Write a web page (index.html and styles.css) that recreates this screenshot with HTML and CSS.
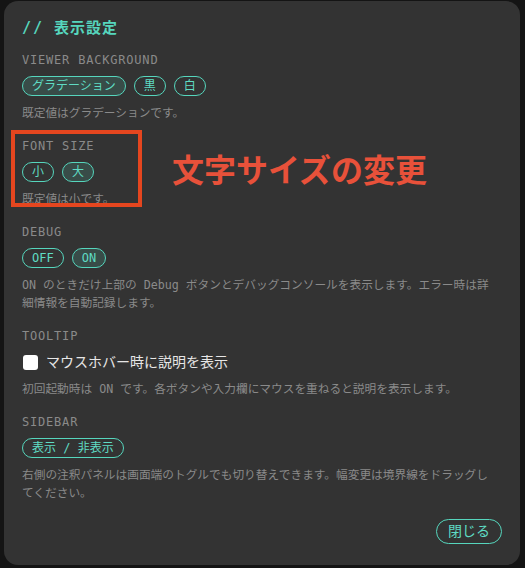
FILE: index.html
```html
<!DOCTYPE html>
<html lang="ja">

<head>
    <meta charset="UTF-8">
    <meta name="viewport" content="width=device-width, initial-scale=1.0">
    <title>表示設定</title>
    <link rel="stylesheet" href="styles.css">
</head>

<body>
    <div class="panel">
        <h1 class="title"><span class="slash">//</span> 表示設定</h1>

        <div class="group">
            <div class="label">VIEWER BACKGROUND</div>
            <div class="pills">
                <button class="pill on">グラデーション</button>
                <button class="pill">黒</button>
                <button class="pill">白</button>
            </div>
            <p class="note">既定値はグラデーションです。</p>
        </div>

        <div class="group">
            <div class="label">FONT SIZE</div>
            <div class="pills">
                <button class="pill">小</button>
                <button class="pill on">大</button>
            </div>
            <p class="note">既定値は小です。</p>
        </div>

        <div class="group">
            <div class="label">DEBUG</div>
            <div class="pills">
                <button class="pill">OFF</button>
                <button class="pill on">ON</button>
            </div>
            <p class="note">ON のときだけ上部の Debug ボタンとデバッグコンソールを表示します。エラー時は詳細情報を自動記録します。</p>
        </div>

        <div class="group">
            <div class="label">TOOLTIP</div>
            <label class="check">
                <input type="checkbox">
                <span>マウスホバー時に説明を表示</span>
            </label>
            <p class="note">初回起動時は ON です。各ボタンや入力欄にマウスを重ねると説明を表示します。</p>
        </div>

        <div class="group">
            <div class="label">SIDEBAR</div>
            <div class="pills">
                <button class="pill">表示 / 非表示</button>
            </div>
            <p class="note">右側の注釈パネルは画面端のトグルでも切り替えできます。幅変更は境界線をドラッグしてください。</p>
        </div>

        <div class="footer">
            <button class="close">閉じる</button>
        </div>

        <!-- annotation overlay -->
        <div class="mark"></div>
        <div class="mark-text">文字サイズの変更</div>
    </div>
</body>

</html>
```

FILE: styles.css
```css
body {
    margin: 0;
    padding: 1px 5px 3px 4px;
    background-color: #141414;
    font-family: "DejaVu Sans Mono", "Noto Sans CJK JP", monospace;
    color: #8a8a8a;
}

.panel {
    position: relative;
    background-color: #333333;
    border-radius: 14px;
    padding: 17px 18px 21px 18px;
}

.title {
    margin: 0 0 14px;
    font-size: 15px;
    line-height: 20px;
    font-weight: bold;
    color: #56d6bd;
    letter-spacing: 1px;
}

.slash {
    letter-spacing: 2px;
}

.group + .group {
    margin-top: 16px;
}

.label {
    font-size: 12px;
    line-height: 16px;
    letter-spacing: 0.8px;
    color: #8a8a8a;
    margin-bottom: 8px;
}

.pills {
    display: flex;
    gap: 8px;
}

.pill {
    font-family: inherit;
    font-size: 12px;
    line-height: 16px;
    padding: 1px 9px;
    border: 1px solid #56d6bd;
    border-radius: 999px;
    background: transparent;
    color: #5fdcc4;
    cursor: pointer;
}

.pill.on {
    background-color: rgba(86, 214, 189, 0.16);
}

.note {
    margin: 8px 10px 0 0;
    font-size: 11.7px;
    line-height: 18px;
    color: #8a8a8a;
}

.check {
    display: flex;
    align-items: center;
    gap: 8px;
    height: 20px;
    font-size: 14px;
    line-height: 20px;
    color: #e6e6e6;
}

.check input {
    appearance: none;
    margin: 0 0 0 1px;
    width: 15px;
    height: 15px;
    border-radius: 3px;
    background-color: #ffffff;
}

.footer {
    display: flex;
    justify-content: flex-end;
    margin-top: 17px;
}

.close {
    font-family: inherit;
    font-size: 14px;
    line-height: 19px;
    padding: 2px 11px;
    border: 1px solid #56d6bd;
    border-radius: 999px;
    background: transparent;
    color: #5fdcc4;
    cursor: pointer;
}

.mark {
    position: absolute;
    left: 7px;
    top: 129px;
    width: 131px;
    height: 77px;
    box-sizing: border-box;
    border: 4px solid #e5461f;
}

.mark-text {
    position: absolute;
    left: 168px;
    top: 147px;
    font-family: "Noto Sans CJK JP", sans-serif;
    font-size: 32px;
    line-height: 40px;
    font-weight: bold;
    color: #e8513a;
}
```
